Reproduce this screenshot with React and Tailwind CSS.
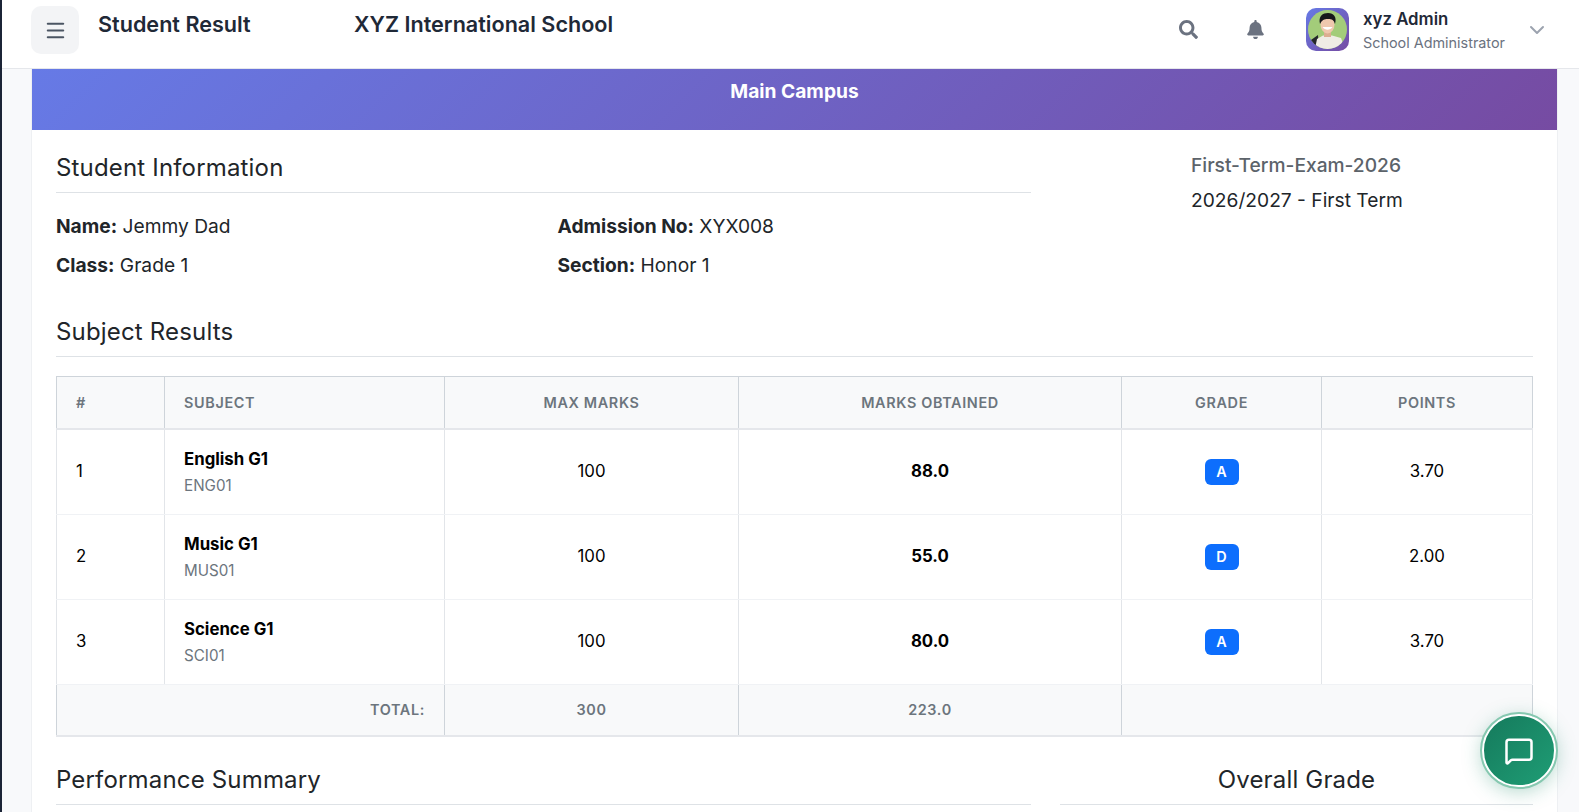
import React from "react";
import { Menu, ChevronDown, MessageSquare } from "lucide-react";
import { FaSearch, FaBell } from "react-icons/fa";

const rows = [
  { n: 1, name: "English G1", code: "ENG01", marks: "88.0", grade: "A", points: "3.70" },
  { n: 2, name: "Music G1", code: "MUS01", marks: "55.0", grade: "D", points: "2.00" },
  { n: 3, name: "Science G1", code: "SCI01", marks: "80.0", grade: "A", points: "3.70" },
];

const Avatar = () => (
  <div className="w-[43px] h-[43px] rounded-[10px] bg-[linear-gradient(135deg,#667ae6,#764ba2)] flex items-center justify-center">
    <svg width="39" height="39" viewBox="0 0 39 39">
      <defs>
        <clipPath id="avatar-clip">
          <circle cx="19.5" cy="19.5" r="19.5" />
        </clipPath>
      </defs>
      <g clipPath="url(#avatar-clip)">
        <rect width="39" height="39" fill="#a3cc7a" />
        <path d="M1 39 L3 30 L10 25 L11 39 Z" fill="#24262b" />
        <path d="M7 39 L9 29 L15 25.5 L24 25.5 L33 28 L37 39 Z" fill="#efece5" />
        <rect x="16" y="21" width="7" height="6" fill="#dcae92" />
        <ellipse cx="19.5" cy="14.5" rx="7" ry="9" fill="#efc8ae" />
        <path d="M12 14 C10 6 15 3 20 3 C26 3 29 7 27 14 C26 10 24 9 20 9 C16 9 14 10 12 14 Z" fill="#17171a" />
        <path d="M14.5 17 C17 20.5 22 20.5 24.5 17 Z" fill="#fff" />
      </g>
    </svg>
  </div>
);

const SectionTitle = ({ children, className = "" }) => (
  <h3 className={"text-[24px] leading-[29px] font-normal tracking-[0.17px] text-[#212529] pb-[10px] border-b border-[#dee2e6] " + className}>{children}</h3>
);

const th = "border border-[#ced4da] border-b-2 border-b-[#e5e7eb] bg-[#f8f9fa] text-[14.4px] font-semibold tracking-[0.65px] text-[#6c757d] uppercase h-[52px] pt-[2px]";
const td = "border-x border-x-[#e2e5e9] border-y border-y-[#f0f2f5] text-[16.8px] text-black text-center";
const tf = "border border-[#ced4da] border-t-[#eceef1] border-b-2 border-b-[#e5e7eb] bg-[#f8f9fa] text-[14.4px] font-semibold tracking-[0.65px] text-[#6c757d] text-center";

export default function App() {
  return (
    <div className="h-[812px] overflow-hidden bg-[#f8f9fb] border-l-2 border-[#1b2436] text-[#212529] font-['Inter',sans-serif] relative">
      <header className="h-[69px] bg-white border-b border-[#e5e7eb] flex items-start pl-[29px] pr-[30px]">
        <button className="w-12 h-12 mt-[6px] rounded-[10px] bg-[#f3f4f6] flex items-center justify-center text-[#4b5563]" aria-label="Menu">
          <Menu size={23} strokeWidth={2.25} />
        </button>
        <h4 className="ml-[19px] mt-[10px] w-[256px] text-[21.6px] leading-[28px] font-semibold text-[#1f2937]">Student Result</h4>
        <h4 className="mt-[10px] text-[21.6px] leading-[28px] font-semibold text-[#1f2937]">XYZ International School</h4>
        <div className="ml-auto flex items-center h-[59px]">
          <FaSearch size={19} className="text-[#6b7280]" />
          <FaBell size={19} className="ml-[48px] text-[#6b7280]" />
          <div className="ml-[41px]"><Avatar /></div>
          <div className="ml-[14px] w-[162px] pt-[3px]">
            <div className="text-[16.8px] leading-[22px] font-semibold text-[#1f2937]">xyz Admin</div>
            <div className="text-[14.4px] leading-[22px] text-[#6b7280] mt-[2px]">School Administrator</div>
          </div>
          <ChevronDown size={24} className="text-[#9ca3af]" />
        </div>
      </header>

      <main className="ml-[29px] w-[1527px] h-[743px] bg-white border-x border-[#eef0f3]">
        <div className="h-[61px] bg-[linear-gradient(135deg,#667ae6,#764ba2)] text-white text-[19.2px] font-bold text-center pt-[9px] leading-[27px]">
          Main Campus
        </div>
        <div className="px-6 pt-[23px]">
          <div className="flex gap-[29px]">
            <div className="w-[975px]">
              <SectionTitle>Student Information</SectionTitle>
              <div className="grid grid-cols-2 gap-y-[15px] mt-[21px] text-[19.2px] leading-[24px] text-[#212529]">
                <div><b className="font-bold">Name:</b> Jemmy Dad</div>
                <div className="pl-[14px]"><b className="font-bold">Admission No:</b> XYX008</div>
                <div><b className="font-bold">Class:</b> Grade 1</div>
                <div className="pl-[14px]"><b className="font-bold">Section:</b> Honor 1</div>
              </div>
            </div>
            <div className="w-[473px] pl-[131px] text-[19.2px] leading-[24px]">
              <div className="font-medium text-[#5c636a]">First-Term-Exam-2026</div>
              <div className="mt-[11px]">2026/2027 - First Term</div>
            </div>
          </div>

          <SectionTitle className="mt-[40px]">Subject Results</SectionTitle>

          <table className="mt-[19px] w-[1476px] table-fixed border-collapse">
            <colgroup>
              <col className="w-[108px]" />
              <col className="w-[280px]" />
              <col className="w-[294px]" />
              <col className="w-[383px]" />
              <col className="w-[200px]" />
              <col className="w-[211px]" />
            </colgroup>
            <thead>
              <tr>
                <th className={th + " text-left pl-[19px]"}>#</th>
                <th className={th + " text-left pl-[19px]"}>Subject</th>
                <th className={th + " text-center"}>Max Marks</th>
                <th className={th + " text-center"}>Marks Obtained</th>
                <th className={th + " text-center"}>Grade</th>
                <th className={th + " text-center"}>Points</th>
              </tr>
            </thead>
            <tbody>
              {rows.map((r) => (
                <tr key={r.n} className={r.n === 1 ? "h-[86px]" : "h-[85px]"}>
                  <td className={td + " !text-left pl-[19px]"}>{r.n}</td>
                  <td className={td + " !text-left pl-[19px] pb-[1px]"}>
                    <div className="text-[16.8px] leading-[24px] font-bold text-black">{r.name}</div>
                    <div className="text-[15.2px] leading-[21px] text-[#6c757d] mt-[4px]">{r.code}</div>
                  </td>
                  <td className={td}>100</td>
                  <td className={td + " font-bold"}>{r.marks}</td>
                  <td className={td}>
                    <span className="inline-flex items-center justify-center min-w-[34px] px-[11px] h-[26px] rounded-[6px] bg-[#0d6efd] text-white text-[14.4px] leading-none font-semibold">{r.grade}</span>
                  </td>
                  <td className={td}>{r.points}</td>
                </tr>
              ))}
            </tbody>
            <tfoot>
              <tr className="h-[51px]">
                <td colSpan={2} className={tf + " !text-right pr-[19px]"}>TOTAL:</td>
                <td className={tf}>300</td>
                <td className={tf}>223.0</td>
                <td colSpan={2} className={tf}></td>
              </tr>
            </tfoot>
          </table>

          <div className="flex gap-[29px] mt-[28px]">
            <SectionTitle className="w-[975px]">Performance Summary</SectionTitle>
            <SectionTitle className="w-[473px] text-center">Overall Grade</SectionTitle>
          </div>
        </div>
      </main>

      <button
        className="absolute left-[1480px] top-[714px] w-[74px] h-[73px] rounded-full bg-[linear-gradient(135deg,#157a5c,#1f9d75)] border-2 border-white outline-2 outline-[#86c8b0] shadow-[0_4px_20px_rgba(25,135,100,0.35)] flex items-center justify-center text-white"
        aria-label="Chat"
      >
        <MessageSquare size={30} strokeWidth={2} />
      </button>
    </div>
  );
}
